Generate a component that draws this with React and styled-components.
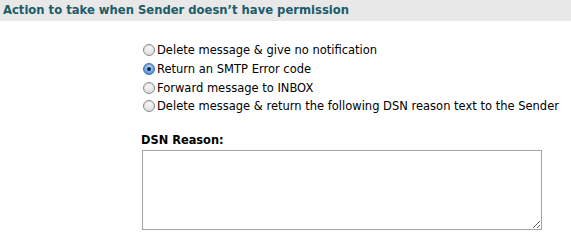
import React, { useState } from "react";
import styled, { createGlobalStyle } from "styled-components";

const GlobalStyle = createGlobalStyle`
  html, body {
    margin: 0;
    padding: 0;
    background: #fff;
  }
  body {
    font-family: "DejaVu Sans", Verdana, sans-serif;
  }
`;

const Page = styled.div`
  width: 571px;
  height: 248px;
  overflow: hidden;
`;

const SectionHeader = styled.h2`
  margin: 0;
  height: 21px;
  padding: 3px 0 0 3px;
  box-sizing: border-box;
  background: #e8e8e8;
  color: #1c5b68;
  font-size: 11.6px;
  font-weight: bold;
  line-height: 15px;
`;

const Body = styled.div`
  padding: 20px 0 0 141px;
`;

const OptionList = styled.div`
  display: flex;
  flex-direction: column;
  padding-left: 2px;
`;

const Option = styled.label`
  display: flex;
  align-items: center;
  height: 18.7px;
  font-size: 11.5px;
  color: #000;
  cursor: pointer;
`;

const Radio = styled.input.attrs({ type: "radio" })`
  appearance: none;
  margin: 0 2px 0 0;
  width: 12px;
  height: 12px;
  border-radius: 50%;
  border: 1px solid #8a8a8a;
  box-sizing: border-box;
  background: linear-gradient(#fdfdfd, #dcdcdc);
  box-shadow: inset 0 1px 1px rgba(0, 0, 0, 0.15);
  position: relative;

  &:checked {
    border-color: #3d6fb0;
    background: radial-gradient(circle at 50% 35%, #cfe6fb 0%, #6fa8e6 55%, #3a7fd0 100%);
  }
  &:checked::after {
    content: "";
    position: absolute;
    left: 3px;
    top: 3px;
    width: 4px;
    height: 4px;
    border-radius: 50%;
    background: #10213a;
  }
`;

const FieldLabel = styled.div`
  margin-top: 17px;
  font-size: 11.4px;
  font-weight: bold;
  color: #000;
  line-height: 14px;
`;

const Reason = styled.textarea`
  display: block;
  margin: 3px 0 0 1px;
  width: 400px;
  height: 80px;
  box-sizing: border-box;
  border: 1px solid #a3a3a3;
  padding: 2px;
  font-family: "DejaVu Sans", Verdana, sans-serif;
  font-size: 11px;
  resize: both;
  outline: none;
`;

const options = [
  "Delete message & give no notification",
  "Return an SMTP Error code",
  "Forward message to INBOX",
  "Delete message & return the following DSN reason text to the Sender",
];

export default function App() {
  const [choice, setChoice] = useState(1);

  return (
    <Page>
      <GlobalStyle />
      <SectionHeader>Action to take when Sender doesn’t have permission</SectionHeader>
      <Body>
        <OptionList>
          {options.map((text, i) => (
            <Option key={text}>
              <Radio name="action" checked={choice === i} onChange={() => setChoice(i)} />
              {text}
            </Option>
          ))}
        </OptionList>
        <FieldLabel>DSN Reason:</FieldLabel>
        <Reason />
      </Body>
    </Page>
  );
}
